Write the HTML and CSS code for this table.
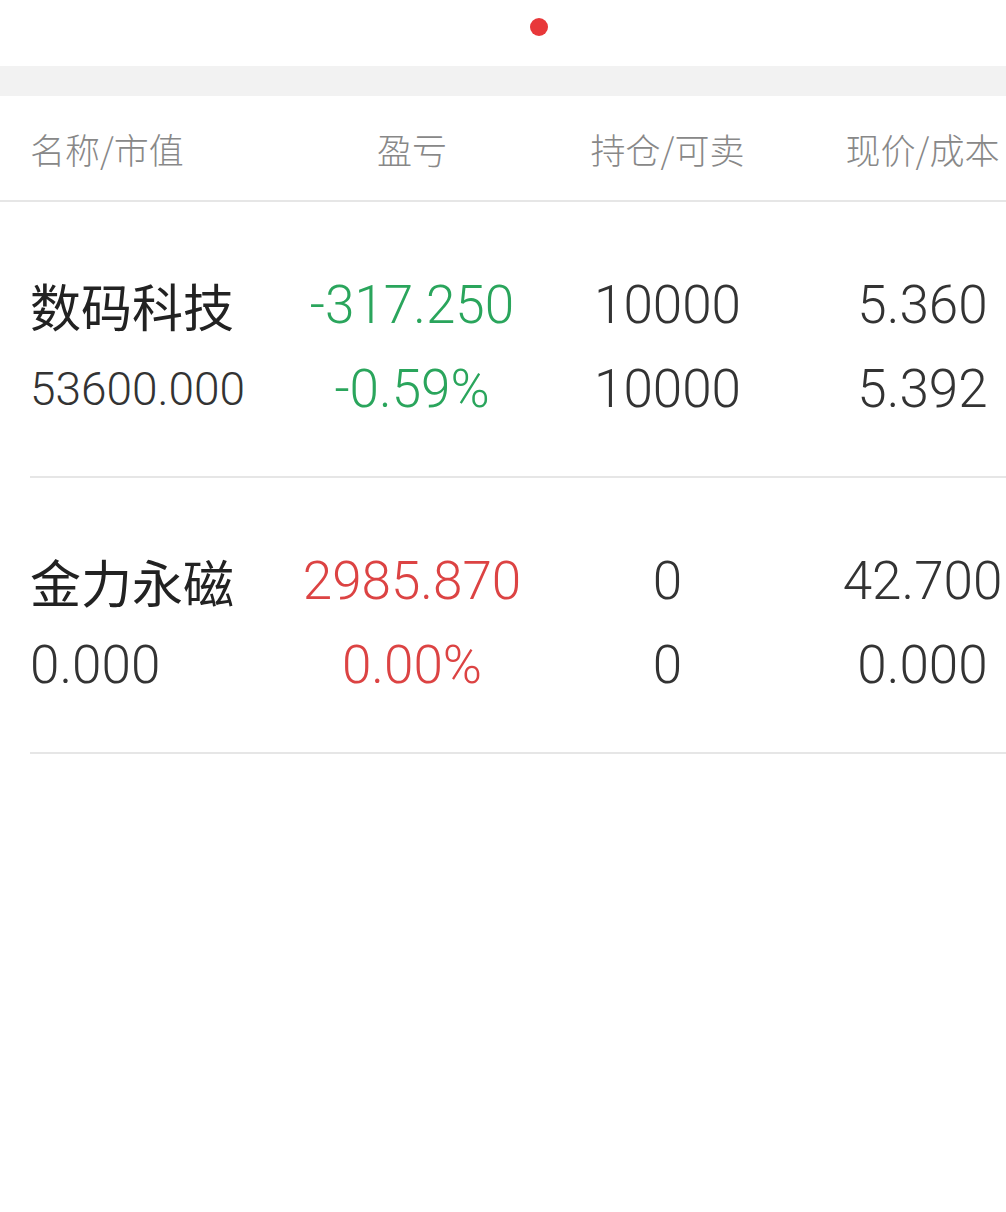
FILE: index.html
```html
<!DOCTYPE html>
<html lang="zh-CN">
<head>
<meta charset="utf-8">
<title>持仓</title>
<link rel="stylesheet" href="styles.css">
</head>
<body>
<div class="page">
  <div class="top">
    <span class="dot"></span>
  </div>
  <div class="band"></div>
  <div class="table">
    <div class="head">
      <div class="cell c1">名称/市值</div>
      <div class="cell c2">盈亏</div>
      <div class="cell c3">持仓/可卖</div>
      <div class="cell c4">现价/成本</div>
    </div>
    <div class="row">
      <div class="line">
        <div class="cell c1 name">数码科技</div>
        <div class="cell c2 num green">-317.250</div>
        <div class="cell c3 num">10000</div>
        <div class="cell c4 num">5.360</div>
      </div>
      <div class="line">
        <div class="cell c1 num small">53600.000</div>
        <div class="cell c2 num green">-0.59%</div>
        <div class="cell c3 num">10000</div>
        <div class="cell c4 num">5.392</div>
      </div>
    </div>
    <div class="row">
      <div class="line">
        <div class="cell c1 name">金力永磁</div>
        <div class="cell c2 num red">2985.870</div>
        <div class="cell c3 num">0</div>
        <div class="cell c4 num">42.700</div>
      </div>
      <div class="line">
        <div class="cell c1 num">0.000</div>
        <div class="cell c2 num red">0.00%</div>
        <div class="cell c3 num">0</div>
        <div class="cell c4 num">0.000</div>
      </div>
    </div>
  </div>
</div>
</body>
</html>
```

FILE: styles.css
```css
html, body {
  margin: 0;
  padding: 0;
  background: #ffffff;
  overflow: hidden;
}
body {
  font-family: Roboto, "Noto Sans CJK SC", sans-serif;
  color: #333333;
  width: 1006px;
  height: 1212px;
}
.page {
  width: 1006px;
  overflow: hidden;
}
.top {
  height: 66px;
  display: flex;
  justify-content: center;
  align-items: flex-start;
}
.dot {
  display: block;
  width: 18px;
  height: 18px;
  border-radius: 50%;
  background: #e8383a;
  margin-top: 18px;
  margin-left: 72px;
}
.band {
  height: 30px;
  background: #f2f2f2;
}
.table {
  width: 1080px;
}
.head {
  display: flex;
  align-items: center;
  height: 104px;
  padding-left: 30px;
  border-bottom: 2px solid #e6e6e6;
  font-family: "Noto Sans CJK SC", sans-serif;
  font-size: 35px;
  font-weight: 300;
  color: #888888;
}
.cell {
  flex: none;
  white-space: nowrap;
}
.c1 { width: 254px; text-align: left; }
.c2 { width: 256px; text-align: center; }
.c3 { width: 255px; text-align: center; }
.c4 { width: 255px; text-align: center; }
.row {
  margin-left: 30px;
  padding-top: 61px;
  padding-bottom: 45px;
  border-bottom: 2px solid #e6e6e6;
}
.line {
  display: flex;
  align-items: center;
  height: 84px;
}
.name {
  font-family: "Noto Sans CJK SC", sans-serif;
  font-size: 51px;
  color: #222222;
}
.num {
  font-family: Roboto, sans-serif;
  font-size: 53px;
  font-weight: 300;
  color: #333333;
}
.small {
  font-size: 46px;
}
.green { color: #2aa55c; }
.red { color: #dc4343; }
```
